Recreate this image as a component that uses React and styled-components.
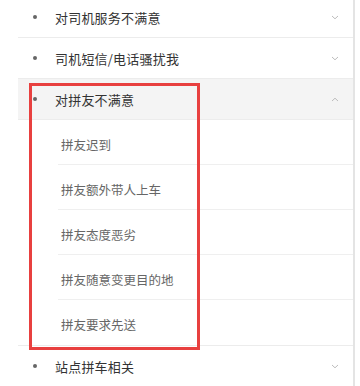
import React from 'react';
import styled, { createGlobalStyle } from 'styled-components';

const GlobalStyle = createGlobalStyle`
  html, body {
    margin: 0;
    padding: 0;
    background: #fff;
    overflow: hidden;
  }
  body {
    font-family: "Noto Sans CJK SC", "Noto Sans", sans-serif;
  }
`;

const Page = styled.div`
  position: relative;
  width: 360px;
  height: 386px;
  overflow: hidden;
  background: #fff;
`;

const List = styled.div`
  margin: -3px 0 0 18px;
  width: 335px;
  border-right: 2px solid #e4e4e4;
`;

const Header = styled.div`
  display: flex;
  align-items: center;
  height: 41px;
  box-sizing: border-box;
  border-bottom: 1px solid #ececec;
  background: ${p => (p.open ? '#f4f4f4' : '#fff')};
  padding: 0 14px 0 15px;
`;

const Bullet = styled.span`
  width: 4px;
  height: 4px;
  border-radius: 50%;
  background: #666;
  margin-right: 18px;
  flex: none;
`;

const Title = styled.span`
  flex: 1;
  font-size: 13px;
  color: #333;
  letter-spacing: 0.2px;
`;

const SubList = styled.div`
  padding-left: 40px;
`;

const SubItem = styled.div`
  display: flex;
  align-items: center;
  height: 45px;
  box-sizing: border-box;
  padding: 4px 0 0 3px;
  border-bottom: ${p => (p.last ? 'none' : '1px solid #efefef')};
  font-size: 12.5px;
  color: #666;
`;

const Divider = styled.div`
  height: 1px;
  background: #ececec;
`;

const Highlight = styled.div`
  position: absolute;
  left: 29px;
  top: 83px;
  width: 171px;
  height: 267px;
  box-sizing: border-box;
  border: 3px solid #e8403f;
  pointer-events: none;
`;

const Chevron = ({ up }) => (
  <svg width="8" height="5" viewBox="0 0 8 5">
    <path
      d={up ? 'M1 4 L4 1.2 L7 4' : 'M1 1 L4 3.8 L7 1'}
      fill="none"
      stroke="#bdbdbd"
      strokeWidth="1"
    />
  </svg>
);

const groups = [
  { title: '对司机服务不满意' },
  { title: '司机短信/电话骚扰我' },
  {
    title: '对拼友不满意',
    open: true,
    items: ['拼友迟到', '拼友额外带人上车', '拼友态度恶劣', '拼友随意变更目的地', '拼友要求先送'],
  },
  { title: '站点拼车相关' },
];

export default function App() {
  return (
    <Page>
      <GlobalStyle />
      <List>
        {groups.map(g => (
          <div key={g.title}>
            <Header open={g.open}>
              <Bullet />
              <Title>{g.title}</Title>
              <Chevron up={g.open} />
            </Header>
            {g.open && (
              <>
                <SubList>
                  {g.items.map((it, i) => (
                    <SubItem key={it} last={i === g.items.length - 1}>{it}</SubItem>
                  ))}
                </SubList>
                <Divider />
              </>
            )}
          </div>
        ))}
      </List>
      <Highlight />
    </Page>
  );
}
